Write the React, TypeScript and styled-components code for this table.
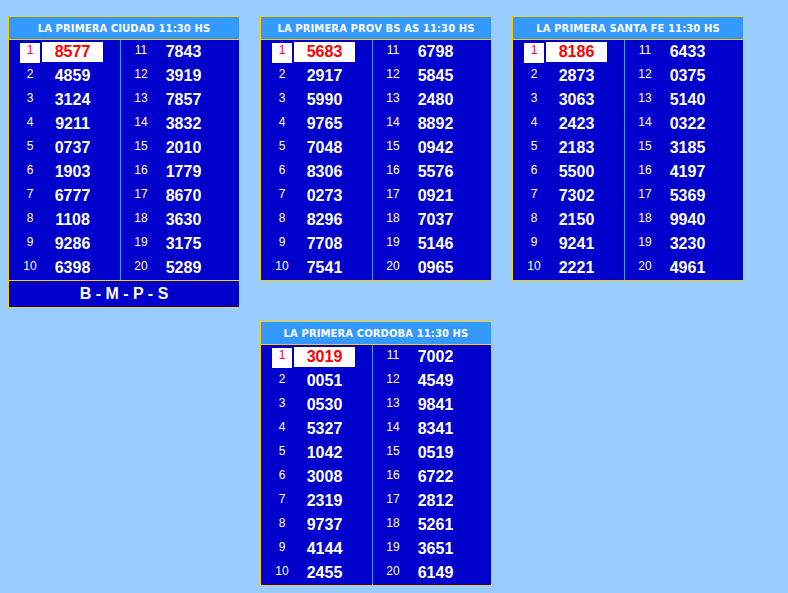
import React from "react";
import styled, { createGlobalStyle } from "styled-components";

const GlobalStyle = createGlobalStyle`
  html, body { margin: 0; padding: 0; background: #99ccff; }
  body { font-family: "Liberation Sans", Arial, sans-serif; }
`;

const Page = styled.div`
  display: grid;
  grid-template-columns: repeat(3, 232px);
  column-gap: 20px;
  row-gap: 13px;
  align-items: start;
  padding: 16px 0 0 8px;
`;

const Card = styled.div<{ $col?: number }>`
  box-sizing: border-box;
  width: 232px;
  border: 1px solid #ffcc00;
  background: #0000cc;
  grid-column: ${(p) => (p.$col ? String(p.$col) : "auto")};
`;

const Header = styled.div`
  height: 22px;
  background: #3399ff;
  border-bottom: 1px solid #ffcc00;
  color: #ffffff;
  font-family: "DejaVu Sans", Verdana, sans-serif;
  font-weight: bold;
  font-size: 10px;
  letter-spacing: 0.1px;
  display: flex;
  align-items: center;
  justify-content: center;
  white-space: nowrap;
`;

const Body = styled.div`
  display: grid;
  grid-template-columns: 111px 1px 118px;
  height: 240px;
`;

const Divider = styled.div`
  background: #3399ff;
`;

const Column = styled.div`
  display: flex;
  flex-direction: column;
`;

const Row = styled.div<{ $pad: number }>`
  box-sizing: border-box;
  height: 24px;
  display: flex;
  align-items: flex-start;
  padding: 3px 0 1px ${(p) => p.$pad}px;
  gap: 2px;
`;

const Pos = styled.div<{ $first?: boolean }>`
  width: 20px;
  height: 20px;
  background: ${(p) => (p.$first ? "#ffffff" : "transparent")};
  color: ${(p) => (p.$first ? "#ff0033" : "#ffffff")};
  font-size: 12px;
  line-height: 14px;
  text-align: center;
`;

const Num = styled.div<{ $first?: boolean }>`
  width: 61px;
  height: 20px;
  background: ${(p) => (p.$first ? "#ffffff" : "transparent")};
  color: ${(p) => (p.$first ? "#ff0000" : "#ffffff")};
  font-size: 16px;
  font-weight: bold;
  line-height: 18px;
  text-align: center;
  margin-top: -1px;
  padding-top: 1px;
  box-sizing: border-box;
`;

const Footer = styled.div`
  height: 26px;
  border-top: 1px solid #ffcc00;
  color: #ffffff;
  font-size: 16px;
  font-weight: bold;
  display: flex;
  align-items: center;
  justify-content: center;
`;

type Draw = { title: string; left: string[]; right: string[]; footer?: string; col?: number };

const draws: Draw[] = [
  {
    title: "LA PRIMERA CIUDAD 11:30 HS",
    left: ["8577", "4859", "3124", "9211", "0737", "1903", "6777", "1108", "9286", "6398"],
    right: ["7843", "3919", "7857", "3832", "2010", "1779", "8670", "3630", "3175", "5289"],
    footer: "B - M - P - S",
  },
  {
    title: "LA PRIMERA PROV BS AS 11:30 HS",
    left: ["5683", "2917", "5990", "9765", "7048", "8306", "0273", "8296", "7708", "7541"],
    right: ["6798", "5845", "2480", "8892", "0942", "5576", "0921", "7037", "5146", "0965"],
  },
  {
    title: "LA PRIMERA SANTA FE 11:30 HS",
    left: ["8186", "2873", "3063", "2423", "2183", "5500", "7302", "2150", "9241", "2221"],
    right: ["6433", "0375", "5140", "0322", "3185", "4197", "5369", "9940", "3230", "4961"],
  },
  {
    title: "LA PRIMERA CORDOBA 11:30 HS",
    left: ["3019", "0051", "0530", "5327", "1042", "3008", "2319", "9737", "4144", "2455"],
    right: ["7002", "4549", "9841", "8341", "0519", "6722", "2812", "5261", "3651", "6149"],
    col: 2,
  },
];

function Results({ d }: { d: Draw }) {
  return (
    <Card $col={d.col}>
      <Header>{d.title}</Header>
      <Body>
        <Column>
          {d.left.map((n, i) => (
            <Row key={i} $pad={11}>
              <Pos $first={i === 0}>{i + 1}</Pos>
              <Num $first={i === 0}>{n}</Num>
            </Row>
          ))}
        </Column>
        <Divider />
        <Column>
          {d.right.map((n, i) => (
            <Row key={i} $pad={10}>
              <Pos>{i + 11}</Pos>
              <Num>{n}</Num>
            </Row>
          ))}
        </Column>
      </Body>
      {d.footer && <Footer>{d.footer}</Footer>}
    </Card>
  );
}

export default function App() {
  return (
    <>
      <GlobalStyle />
      <Page>
        {draws.map((d) => (
          <Results key={d.title} d={d} />
        ))}
      </Page>
    </>
  );
}
